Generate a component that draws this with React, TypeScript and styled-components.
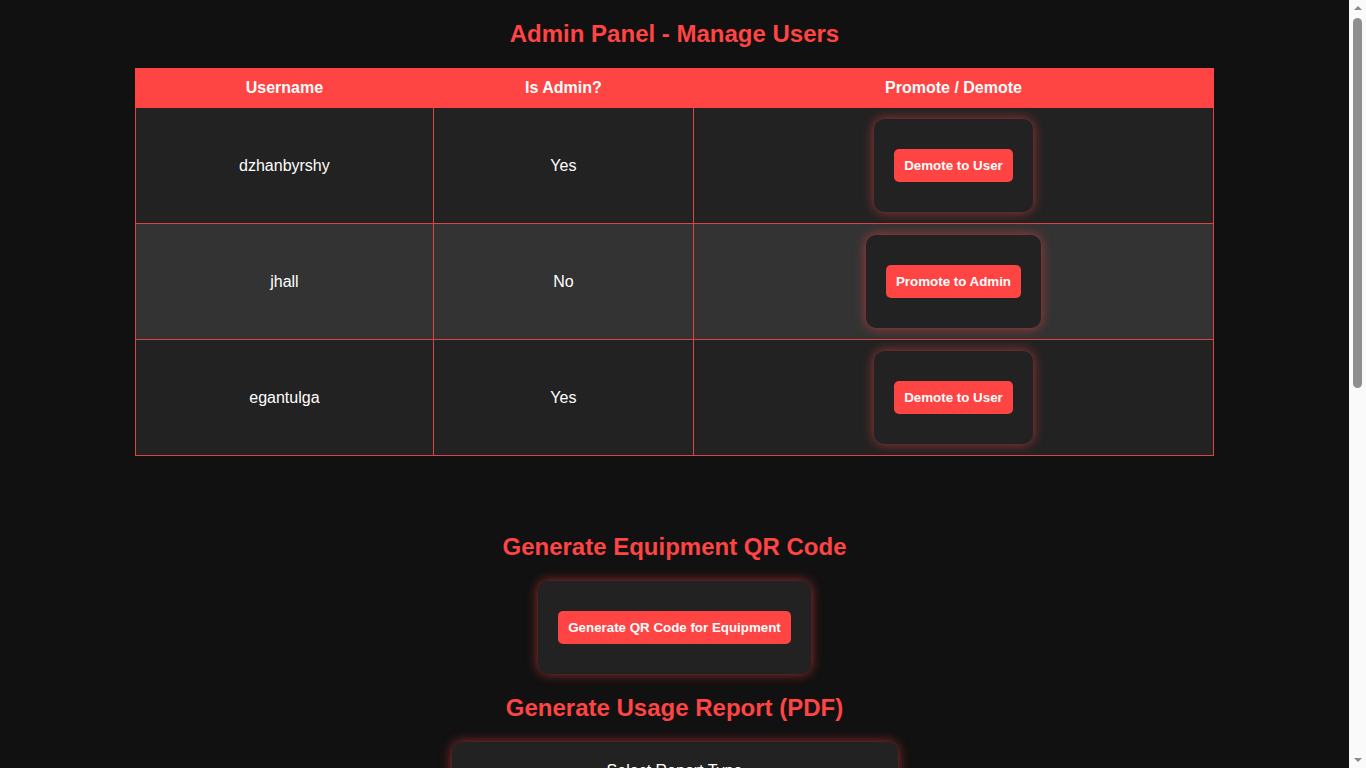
import React from "react";
import styled, { createGlobalStyle } from "styled-components";

type User = { username: string; isAdmin: boolean };

const users: User[] = [
  { username: "dzhanbyrshy", isAdmin: true },
  { username: "jhall", isAdmin: false },
  { username: "egantulga", isAdmin: true },
];

function App() {
  return (
    <>
      <GlobalStyle />
      <Page>
        <Title>Admin Panel - Manage Users</Title>
        <UserTable>
          <thead>
            <tr>
              <HeadCell $width={298}>Username</HeadCell>
              <HeadCell $width={260}>Is Admin?</HeadCell>
              <HeadCell>Promote / Demote</HeadCell>
            </tr>
          </thead>
          <tbody>
            {users.map((user, i) => (
              <Row key={user.username} $alt={i % 2 === 1}>
                <Cell>{user.username}</Cell>
                <Cell>{user.isAdmin ? "Yes" : "No"}</Cell>
                <Cell>
                  <Card as="form" onSubmit={(e: React.FormEvent) => e.preventDefault()}>
                    <RedButton type="submit">
                      {user.isAdmin ? "Demote to User" : "Promote to Admin"}
                    </RedButton>
                  </Card>
                </Cell>
              </Row>
            ))}
          </tbody>
        </UserTable>

        <Section>
          <Title>Generate Equipment QR Code</Title>
          <Card>
            <RedButton>Generate QR Code for Equipment</RedButton>
          </Card>

          <Title>Generate Usage Report (PDF)</Title>
          <ReportCard>
            <FieldLabel htmlFor="report-type">Select Report Type</FieldLabel>
            <Select id="report-type" defaultValue="equipment">
              <option value="equipment">Equipment Usage</option>
              <option value="user">User Activity</option>
            </Select>
            <FieldLabel htmlFor="start-date">Start Date</FieldLabel>
            <TextInput id="start-date" type="date" />
            <FieldLabel htmlFor="end-date">End Date</FieldLabel>
            <TextInput id="end-date" type="date" />
            <RedButton>Generate PDF Report</RedButton>
          </ReportCard>
        </Section>
      </Page>

      <ScrollTrack aria-hidden="true">
        <Arrow $dir="up" />
        <Thumb />
        <Arrow $dir="down" />
      </ScrollTrack>
    </>
  );
}

const GlobalStyle = createGlobalStyle`
  html, body {
    margin: 0;
    padding: 0;
    background-color: #111111;
    color: #ffffff;
    font-family: "Liberation Sans", Arial, sans-serif;
  }

  body {
    margin-right: 17px;
  }
`;

const Page = styled.div`
  display: flex;
  flex-direction: column;
  align-items: center;
  padding-bottom: 420px;
`;

const Title = styled.h2`
  margin: 20px 0;
  font-size: 24px;
  line-height: 28px;
  font-weight: bold;
  color: #ff4444;
  text-align: center;
`;

const UserTable = styled.table`
  width: 80%;
  border-collapse: collapse;
  font-size: 16px;
  border: 1px solid #d94545;
`;

const HeadCell = styled.th<{ $width?: number }>`
  width: ${(p) => (p.$width ? `${p.$width}px` : "auto")};
  height: 39px;
  padding: 0 10px;
  box-sizing: border-box;
  background-color: #ff4444;
  color: #ffffff;
  font-weight: bold;
  border: 1px solid #ff4444;
`;

const Row = styled.tr<{ $alt: boolean }>`
  background-color: ${(p) => (p.$alt ? "#333333" : "#222222")};
`;

const Cell = styled.td`
  height: 116px;
  box-sizing: border-box;
  padding: 10px;
  text-align: center;
  vertical-align: middle;
  border: 1px solid #d94545;
`;

const Card = styled.div`
  display: inline-flex;
  flex-direction: column;
  align-items: center;
  padding: 20px;
  background-color: #222222;
  border-radius: 10px;
  box-shadow: 0 0 12px rgba(255, 68, 68, 0.6);
`;

const RedButton = styled.button`
  margin: 10px 0;
  padding: 9px 10px;
  border: none;
  border-radius: 5px;
  background-color: #ff4444;
  color: #ffffff;
  font-family: "Liberation Sans", Arial, sans-serif;
  font-size: 13.333px;
  line-height: 15px;
  font-weight: bold;
  cursor: pointer;
`;

const Section = styled.section`
  margin-top: 57px;
  display: flex;
  flex-direction: column;
  align-items: center;
`;

const ReportCard = styled(Card)`
  width: 446px;
  box-sizing: border-box;
  align-items: stretch;
  text-align: center;
`;

const FieldLabel = styled.label`
  display: block;
  margin: 0 0 8px;
  font-size: 16px;
  color: #ffffff;
`;

const Select = styled.select`
  margin-bottom: 16px;
  padding: 8px;
  background-color: #333333;
  color: #ffffff;
  border: 1px solid #555555;
  border-radius: 5px;
  font-size: 14px;
`;

const TextInput = styled.input`
  margin-bottom: 16px;
  padding: 8px;
  background-color: #333333;
  color: #ffffff;
  border: 1px solid #555555;
  border-radius: 5px;
  font-size: 14px;
`;

const ScrollTrack = styled.div`
  position: fixed;
  top: 0;
  right: 0;
  width: 17px;
  height: 100vh;
  display: flex;
  flex-direction: column;
  align-items: center;
  background-color: #fafafa;
`;

const Arrow = styled.div<{ $dir: "up" | "down" }>`
  flex: 0 0 17px;
  width: 0;
  height: 0;
  box-sizing: border-box;
  border-left: 4px solid transparent;
  border-right: 4px solid transparent;
  ${(p) =>
    p.$dir === "up"
      ? "border-bottom: 4px solid #8a8a8a; margin-top: 6px; flex-basis: 4px; margin-bottom: 7px;"
      : "border-top: 4px solid #8a8a8a; margin-top: auto; flex-basis: 4px; margin-bottom: 6px;"}
`;

const Thumb = styled.div`
  width: 9px;
  height: 370px;
  margin-top: 1px;
  border-radius: 5px;
  background-color: #8f8f8f;
`;

export default App;
